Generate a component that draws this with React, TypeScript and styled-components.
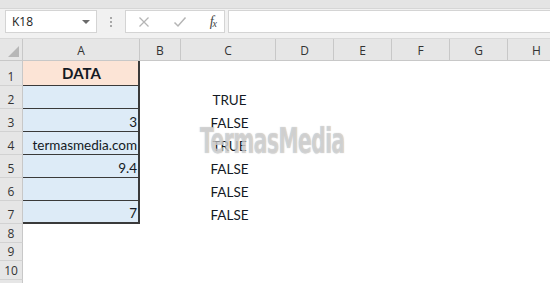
import React from 'react'
import styled, { createGlobalStyle } from 'styled-components'

const GlobalStyle = createGlobalStyle`
  body {
    margin: 0;
    background: #ffffff;
    font-family: Lato, "Open Sans", sans-serif;
  }
`

const Page = styled.div`
  width: 550px;
  height: 283px;
  overflow: hidden;
  background: #ffffff;
`

const TopStrip = styled.div`
  height: 8px;
  background: #e4e4e4;
  border-bottom: 1px solid #d6d6d6;
`

const FormulaBar = styled.div`
  display: flex;
  align-items: flex-start;
  height: 30px;
  padding: 1px 0 0 5px;
  background: #f1f1f1;
  border-bottom: 1px solid #d9d9d9;
  box-sizing: border-box;
`

const NameBox = styled.div`
  display: flex;
  align-items: center;
  justify-content: space-between;
  width: 92px;
  height: 23px;
  box-sizing: border-box;
  padding: 0 6px 0 6px;
  background: #ffffff;
  border: 1px solid #d4d4d4;
  font-family: "Open Sans", sans-serif;
  font-size: 12px;
  color: #222;
`

const Caret = styled.span`
  width: 0;
  height: 0;
  border-left: 4px solid transparent;
  border-right: 4px solid transparent;
  border-top: 4px solid #6a6a6a;
`

const Grip = styled.div`
  display: flex;
  flex-direction: column;
  gap: 2px;
  width: 28px;
  height: 23px;
  justify-content: center;
  align-items: center;
  span {
    width: 2px;
    height: 2px;
    background: #a8a8a8;
  }
`

const IconBox = styled.div`
  display: flex;
  align-items: center;
  width: 100px;
  height: 23px;
  box-sizing: border-box;
  background: #ffffff;
  border: 1px solid #d4d4d4;
  padding: 0 8px 0 12px;
  justify-content: space-between;
`

const Fx = styled.span`
  font-family: "Liberation Serif", serif;
  font-style: italic;
  font-size: 14px;
  color: #444;
  letter-spacing: -1px;
  sub {
    font-size: 10px;
    vertical-align: -1px;
  }
`

const FormulaInput = styled.div`
  flex: 1;
  height: 23px;
  margin-left: 3px;
  background: #ffffff;
  border: 1px solid #d4d4d4;
  border-right: none;
  box-sizing: border-box;
`

const SheetWrap = styled.div`
  position: relative;
`

const Sheet = styled.div`
  display: grid;
  grid-template-columns: 23px 117px 41px 95px 58px 58px 58px 58px 58px;
  grid-template-rows: 22px 25px repeat(6, 23px) repeat(4, 18.5px);
`

const Corner = styled.div`
  position: relative;
  background: #e6e6e6;
  border-right: 1px solid #c8c8c8;
  border-bottom: 1px solid #c8c8c8;
  box-sizing: border-box;
  &::after {
    content: '';
    position: absolute;
    right: 3px;
    bottom: 3px;
    width: 0;
    height: 0;
    border-left: 11px solid transparent;
    border-bottom: 11px solid #b7b7b7;
  }
`

const ColHead = styled.div`
  display: flex;
  align-items: center;
  justify-content: center;
  background: #e6e6e6;
  border-right: 1px solid #c8c8c8;
  border-bottom: 1px solid #c8c8c8;
  box-sizing: border-box;
  font-family: "Open Sans", sans-serif;
  font-size: 12px;
  color: #333;
  padding-top: 1px;
`

const RowHead = styled.div`
  display: flex;
  align-items: flex-end;
  justify-content: center;
  background: #e6e6e6;
  border-right: 1px solid #c8c8c8;
  border-bottom: 1px solid #d2d2d2;
  box-sizing: border-box;
  font-family: "Open Sans", sans-serif;
  font-size: 12px;
  color: #333;
  padding-bottom: 0;
  overflow: hidden;
`

const Cell = styled.div<{
  $bg?: string
  $align?: 'left' | 'right' | 'center'
  $framed?: boolean
  $last?: boolean
  $bold?: boolean
}>`
  display: flex;
  align-items: ${(p) => (p.$bold ? 'center' : 'flex-end')};
  justify-content: ${(p) =>
    p.$align === 'right' ? 'flex-end' : p.$align === 'center' ? 'center' : 'flex-start'};
  box-sizing: border-box;
  padding: 0 1px 1px 3px;
  background: ${(p) => p.$bg || '#ffffff'};
  border-right: ${(p) => (p.$framed ? '2px solid #3a3a3a' : 'none')};
  border-bottom: ${(p) =>
    p.$framed ? (p.$last ? '2px solid #3a3a3a' : '1px solid #3a3a3a') : 'none'};
  font-size: ${(p) => (p.$bold ? '15px' : '13.5px')};
  font-weight: ${(p) => (p.$bold ? 700 : 400)};
  color: #141a24;
  white-space: nowrap;
`

const Watermark = styled.div`
  position: absolute;
  left: 200px;
  top: 85px;
  font-family: "DejaVu Sans", sans-serif;
  font-weight: 700;
  font-size: 35px;
  line-height: 1;
  letter-spacing: -1px;
  transform: scaleX(0.58);
  transform-origin: left top;
  color: rgba(255, 255, 255, 0.5);
  text-shadow: 0 0 1px rgba(120, 120, 120, 0.7);
  white-space: nowrap;
  pointer-events: none;
`

const columns = ['A', 'B', 'C', 'D', 'E', 'F', 'G', 'H']

const rows: Array<{ a: string; c: string }> = [
  { a: 'DATA', c: '' },
  { a: '', c: 'TRUE' },
  { a: '3', c: 'FALSE' },
  { a: 'termasmedia.com', c: 'TRUE' },
  { a: '9.4', c: 'FALSE' },
  { a: '', c: 'FALSE' },
  { a: '7', c: 'FALSE' },
  { a: '', c: '' },
  { a: '', c: '' },
  { a: '', c: '' },
  { a: '', c: '' },
]

export default function App() {
  return (
    <Page>
      <GlobalStyle />
      <TopStrip />
      <FormulaBar>
        <NameBox>
          K18
          <Caret />
        </NameBox>
        <Grip>
          <span />
          <span />
          <span />
        </Grip>
        <IconBox>
          <svg width="12" height="12" viewBox="0 0 12 12">
            <path d="M1.5 1.5 L10.5 10.5 M10.5 1.5 L1.5 10.5" stroke="#b5b5b5" strokeWidth="1.3" fill="none" />
          </svg>
          <svg width="14" height="12" viewBox="0 0 14 12">
            <path d="M1.5 6.5 L5 10 L12.5 1.5" stroke="#b5b5b5" strokeWidth="1.5" fill="none" />
          </svg>
          <Fx>
            f<sub>x</sub>
          </Fx>
        </IconBox>
        <FormulaInput />
      </FormulaBar>
      <SheetWrap>
        <Sheet>
          <Corner />
          {columns.map((c) => (
            <ColHead key={c}>{c}</ColHead>
          ))}
          {rows.map((r, i) => {
            const inTable = i < 7
            return (
              <React.Fragment key={i}>
                <RowHead>{i < 10 ? i + 1 : ''}</RowHead>
                <Cell
                  $bg={i === 0 ? '#fce4d6' : inTable ? '#ddebf7' : undefined}
                  $align={i === 0 ? 'center' : 'right'}
                  $framed={inTable}
                  $last={i === 6}
                  $bold={i === 0}
                >
                  {r.a}
                </Cell>
                <Cell />
                <Cell $align="center">{r.c}</Cell>
                <Cell />
                <Cell />
                <Cell />
                <Cell />
                <Cell />
              </React.Fragment>
            )
          })}
        </Sheet>
        <Watermark>TermasMedia</Watermark>
      </SheetWrap>
    </Page>
  )
}
